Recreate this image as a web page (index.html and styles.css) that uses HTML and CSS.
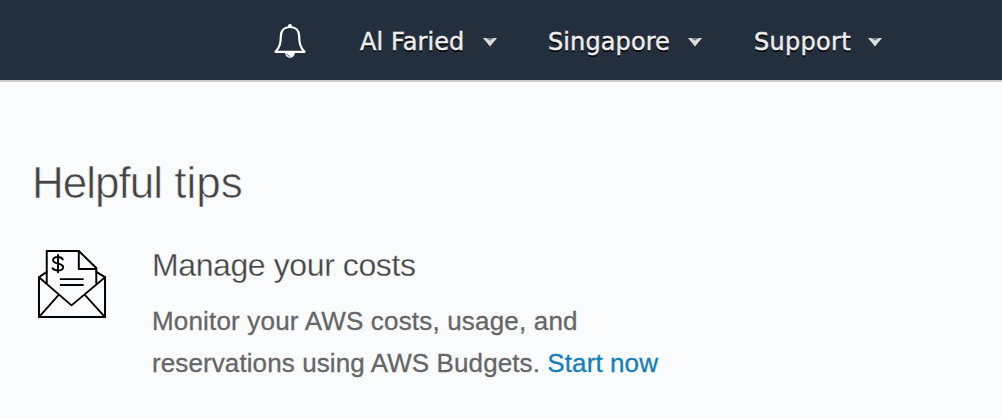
FILE: index.html
```html
<!DOCTYPE html>
<html lang="en">
<head>
<meta charset="utf-8">
<title>Console</title>
<link rel="stylesheet" href="styles.css">
</head>
<body>
<header class="topbar">
  <svg class="bell" viewBox="0 0 34 36" fill="none" stroke="#fff" stroke-width="2.2" stroke-linejoin="round" stroke-linecap="round">
    <path d="M17 4C11.500 4 8.200 7.500 7.900 12.500C7.700 20 7.200 23.500 2.500 28.800H31.500C26.800 23.500 26.300 20 26.100 12.500C25.800 7.500 22.500 4 17 4Z"/>
    <circle cx="17" cy="2.900" r="2" fill="#fff" stroke="none"/>
    <path d="M12 29.500C12.500 36.500 21.500 36.500 22 29.500Z" fill="#fff" stroke="none"/>
    <path d="M14 31C14.500 32.400 15.500 33 16.800 33.200" stroke="#242f3d" stroke-width=".8"/>
  </svg>
  <nav class="menu">
    <a class="item user">Al Faried</a><svg class="caret" viewBox="0 0 14 9"><path d="M0 0H14L7 8.500Z" fill="#dedede"/><path d="M3 0H11L7 2.800Z" fill="#777d84"/></svg>
    <a class="item region">Singapore</a><svg class="caret" viewBox="0 0 14 9"><path d="M0 0H14L7 8.500Z" fill="#dedede"/><path d="M3 0H11L7 2.800Z" fill="#777d84"/></svg>
    <a class="item support">Support</a><svg class="caret" viewBox="0 0 14 9"><path d="M0 0H14L7 8.500Z" fill="#dedede"/><path d="M3 0H11L7 2.800Z" fill="#777d84"/></svg>
  </nav>
</header>
<main class="tips">
  <h1 class="title"><span class="tight">Helpful</span> tips</h1>
  <section class="tip">
    <svg class="envelope" viewBox="0 0 70 70" fill="none" stroke="#000" stroke-width="2" stroke-linejoin="round" stroke-linecap="round">
      <path d="M9 34V1H42L60 18.500V34"/>
      <path d="M42 1V19.500H60"/>
      <path d="M9 22.500L1 28V69H69V28L60 22.500"/>
      <path d="M1 28L34.500 57L69 28M21.500 46L1 69M48 46L69 69" stroke-width="1.900"/>
      <path d="M22.500 30H47M22.500 36H47" stroke-linecap="butt"/>
      <path d="M25.500 9.700C24 6.500 16 6 15.500 10.300C15.200 15 26.200 13 25.900 17.800C25.600 22.300 17 21.800 15 18.800M20.600 5V23" stroke-width="2"/>
    </svg>
    <div class="copy">
      <h2 class="subject">Manage your costs</h2>
      <p class="text"><span class="line first">Monitor your AWS costs, usage, and</span><span class="line">reservations using AWS Budgets. <a class="link">Start now</a></span></p>
    </div>
  </section>
</main>
</body>
</html>
```
FILE: styles.css
```css
* { box-sizing: border-box; }
body {
  margin: 0;
  height: 418px;
  background: #f9fbfd;
  font-family: "Liberation Sans", Arial, sans-serif;
}
.topbar {
  display: flex;
  align-items: flex-start;
  height: 82px;
  padding-left: 273px;
  background: #242f3d;
  border-bottom: 2px solid #ccc;
}
.bell { width: 34px; height: 36px; margin-top: 23px; flex: none; }
.menu {
  display: flex;
  align-items: center;
  height: 84px;
  margin-left: 53px;
  font-family: "DejaVu Sans", Verdana, sans-serif;
  font-size: 24px;
  letter-spacing: .1px;
  white-space: nowrap;
}
.item { color: #eee; text-shadow: 0 2px 0 #000; -webkit-text-stroke: .4px #eee; }
.user { width: 123px; }
.region { width: 140px; }
.support { width: 114px; letter-spacing: .3px; }
.caret { width: 14px; height: 9px; flex: none; margin-right: 51px; }
.caret:last-child { margin-right: 0; }
.region + .caret { margin-right: 52px; }
.tips { padding: 76px 32px 0; }
.title, .subject { margin: 0; font-weight: 400; color: #444; white-space: nowrap; }
.title { font-size: 44px; line-height: 50px; letter-spacing: 0; -webkit-text-stroke: .6px #f9fbfd; }
.tight { letter-spacing: -1px; }
.tip { display: flex; padding: 39px 0 0 6px; }
.envelope { width: 68px; height: 68px; flex: none; margin-top: 3px; }
.copy { margin-left: 46px; }
.subject { font-size: 32px; line-height: 36px; letter-spacing: -.4px; -webkit-text-stroke: .3px #f9fbfd; }
.text { margin: 17px 0 0; font-size: 26px; line-height: 42px; color: #666; letter-spacing: .1px; -webkit-text-stroke: .3px; }
.line { display: block; white-space: nowrap; }
.first { letter-spacing: .18px; }
.link { color: #147eba; }
```
